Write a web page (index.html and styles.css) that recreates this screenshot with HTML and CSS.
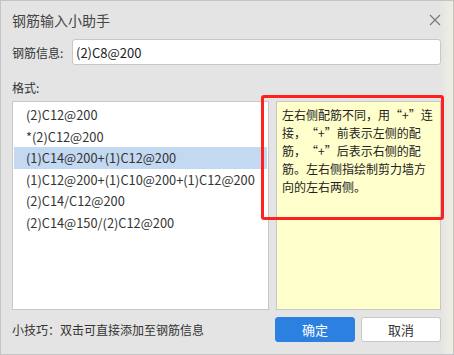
FILE: index.html
```html
<!DOCTYPE html>
<html lang="zh-CN">
<head>
  <meta charset="UTF-8" />
  <meta name="viewport" content="width=device-width, initial-scale=1.0" />
  <title>钢筋输入小助手</title>
  <link rel="stylesheet" href="styles.css">
</head>
<body>
  <div class="dialog">
    <div class="title-bar">
      <span class="title">钢筋输入小助手</span>
      <svg class="close" width="12" height="12" viewBox="0 0 12 12">
        <path d="M1 1 L11 11 M11 1 L1 11" stroke="#7a7a7a" stroke-width="1.2" fill="none" />
      </svg>
    </div>

    <div class="field">
      <label for="rebar">钢筋信息:</label>
      <input type="text" id="rebar" value="(2)C8@200" />
    </div>

    <div class="section-label">格式:</div>

    <div class="main">
      <ul class="format-list">
        <li>(2)C12@200</li>
        <li>*(2)C12@200</li>
        <li class="selected">(1)C14@200+(1)C12@200</li>
        <li>(1)C12@200+(1)C10@200+(1)C12@200</li>
        <li>(2)C14/C12@200</li>
        <li>(2)C14@150/(2)C12@200</li>
      </ul>
      <div class="note">左右侧配筋不同，用<span class="q-open">“</span>+<span class="q-close">”</span>连<br>接，<span class="q-open">“</span>+<span class="q-close">”</span>前表示左侧的配<br>筋，<span class="q-open">“</span>+<span class="q-close">”</span>后表示右侧的配<br>筋。左右侧指绘制剪力墙方<br>向的左右两侧。</div>
    </div>

    <div class="footer">
      <span class="tip">小技巧：双击可直接添加至钢筋信息</span>
      <div class="actions">
        <button class="btn primary">确定</button>
        <button class="btn">取消</button>
      </div>
    </div>

    <div class="highlight-box"></div>
  </div>
</body>
</html>
```

FILE: styles.css
```css
* {
  box-sizing: border-box;
}
body {
  margin: 0;
  font-family: "Noto Sans CJK SC", "Noto Sans", sans-serif;
  color: #333;
  background: #e4e4e4;
}
.dialog {
  position: relative;
  width: 454px;
  height: 355px;
  padding: 0 12px 0 11px;
  border: 1px solid #c4c4c4;
  background: linear-gradient(to right, #e4e4e4 0, #e4e4e4 440px, #ecebe3 447px, #f0eee2 454px);
}
.title-bar {
  display: flex;
  align-items: center;
  justify-content: space-between;
  height: 38px;
}
.title {
  font-size: 14px;
  color: #444;
}
.field {
  display: flex;
  align-items: center;
  height: 26px;
}
.field label {
  width: 60px;
  font-size: 12px;
  color: #333;
}
.field input {
  flex: 1;
  height: 26px;
  padding: 0 3px;
  border: 1px solid #c8c8c8;
  border-radius: 3px;
  background: #fff;
  font-family: inherit;
  font-size: 13px;
  color: #222;
  outline: none;
}
.section-label {
  height: 36px;
  padding-top: 12px;
  font-size: 12px;
  line-height: 22px;
}
.main {
  display: flex;
  gap: 7px;
  height: 209px;
}
.format-list {
  width: 257px;
  margin: 0;
  padding: 2px 1px;
  list-style: none;
  border: 1px solid #c8c8c8;
  background: #fff;
}
.format-list li {
  height: 21.6px;
  padding-left: 12px;
  font-size: 12.8px;
  line-height: 21.6px;
  color: #333;
}
.format-list li.selected {
  background: #c3d8f1;
}
.note {
  flex: 1;
  padding: 4px 4px 0 5px;
  border: 1px solid #c8c8c8;
  background: #ffffcc;
  font-size: 12px;
  line-height: 18px;
  color: #222;
}
.q-open,
.q-close {
  display: inline-block;
  width: 1em;
}
.q-open {
  text-align: right;
}
.q-close {
  text-align: left;
}
.footer {
  display: flex;
  align-items: center;
  justify-content: space-between;
  height: 38px;
}
.tip {
  font-size: 12px;
  color: #333;
}
.actions {
  display: flex;
  gap: 6px;
}
.btn {
  width: 80px;
  height: 25px;
  border: 1px solid #c8c8c8;
  border-radius: 3px;
  background: #fff;
  font-family: inherit;
  font-size: 13px;
  color: #333;
}
.btn.primary {
  border-color: #2c80e0;
  background: #2c80e0;
  color: #fff;
}
.highlight-box {
  position: absolute;
  left: 260px;
  top: 94px;
  width: 183px;
  height: 125px;
  border: 3px solid #ff2020;
  border-radius: 3px;
}
```
